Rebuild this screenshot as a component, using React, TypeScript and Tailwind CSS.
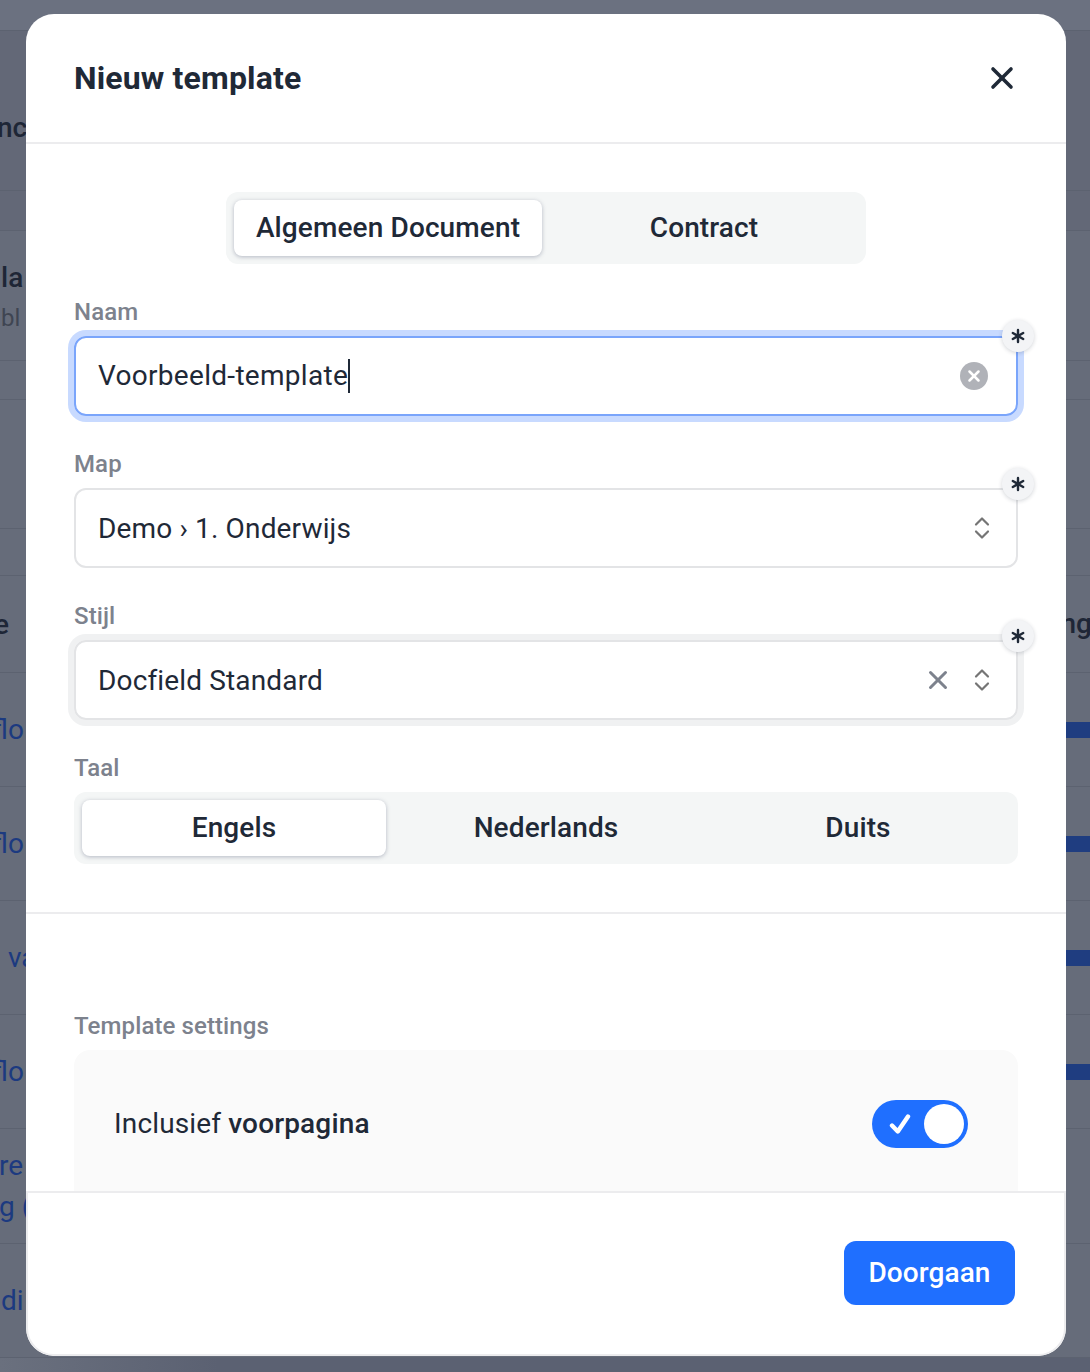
import { X, Asterisk } from 'lucide-react';

const font = { fontFamily: 'Roboto, "Noto Sans", sans-serif' };

// rijen van de pagina achter de modal: hoogte en tekst links/rechts
const ROWS = [
  { h: 'h-[31px]', bg: 'bg-[#6b7180]' },
  { h: 'h-[160px]', left: 'nc', bold: true, offset: '-ml-[3px] mt-[34px]', bg: 'bg-[#636877]' },
  { h: 'h-[40px]', bg: 'bg-[#636877]' },
  { h: 'h-[130px]', left: 'la', sub: 'bl', bold: true, offset: 'ml-[1px] mt-[4px]' },
  { h: 'h-[39px]' },
  { h: 'h-[129px]' },
  { h: 'h-[47px]' },
  { h: 'h-[97px]', left: 'e', bold: true, offset: '-ml-[6px]', right: 'ng' },
  { h: 'h-[114px]', left: 'flo', link: true, offset: '-ml-[8px]', bar: true },
  { h: 'h-[114px]', left: 'flo', link: true, offset: '-ml-[8px]', bar: true },
  { h: 'h-[114px]', left: 'va', link: true, offset: 'ml-[8px]', bar: true },
  { h: 'h-[114px]', left: 'flo', link: true, offset: '-ml-[8px]', bar: true },
  { h: 'h-[115px]', left: 're', sub: 'g (', link: true, offset: '-ml-[1px]' },
  { h: 'h-[114px]', left: 'di', link: true, offset: 'ml-[1px]' },
  { h: 'h-[15px]', bg: 'bg-gradient-to-r from-[#6a707e] to-[#5b6172] to-[20%]' },
];

function Background() {
  return (
    <div className="flex flex-col">
      {ROWS.map((r, i) => (
        <div key={i} className={`${r.h} ${r.bg ?? ''} flex items-center justify-between border-b border-[#5c6270] overflow-hidden`}>
          <div className={`${r.offset ?? ''} text-[28px] leading-[41px] ${r.link ? 'text-[#1c3a80]' : 'text-[#1e2636]'} ${r.bold ? 'font-medium' : ''}`}>
            <div className={r.bold ? 'text-[28px]' : ''}>{r.left}</div>
            {r.sub && <div className={r.bold ? 'text-[24px] font-normal text-[#3f4552]' : ''}>{r.sub}</div>}
          </div>
          {r.right && <div className="text-[28px] font-medium text-[#1e2636] -mr-[2px]">{r.right}</div>}
          {r.bar && <div className="w-[24px] h-[16px] bg-[#1f3d80]" />}
        </div>
      ))}
    </div>
  );
}

function RequiredBadge({ top = '-top-[22px]' }: { top?: string }) {
  return (
    <span className={`absolute ${top} -right-[18px] w-[32px] h-[32px] rounded-full bg-[#f3f4f6] shadow-[0_1px_4px_rgba(30,40,60,0.2)] flex items-center justify-center text-[#1f2937]`}>
      <Asterisk size={24} strokeWidth={2.4} />
    </span>
  );
}

function Label({ children }: { children: string }) {
  return <div className="h-[24px] mb-[12px] text-[24px] leading-[24px] font-medium tracking-[0.1px] text-[#7d828d]">{children}</div>;
}

function Updown() {
  return (
    <svg width="16" height="24" viewBox="0 0 16 24" fill="none" stroke="#757575" strokeWidth="2.2" strokeLinecap="round" strokeLinejoin="round">
      <path d="M2 8.5 8 2.5l6 6" />
      <path d="M2 15.5l6 6 6-6" />
    </svg>
  );
}

function Segment({ options, className = '' }: { options: string[]; className?: string }) {
  return (
    <div
      className={`grid gap-[8px] p-[8px] h-[72px] rounded-[12px] bg-[#f4f6f6] ${options.length === 3 ? 'grid-cols-3' : 'grid-cols-2'} ${className}`}
    >
      {options.map((o, i) => (
        <div
          key={o}
          className={`flex items-center justify-center rounded-[8px] text-[28px] font-medium tracking-[0.12px] text-[#1f2937] ${
            i === 0 ? 'bg-white shadow-[0_1px_4px_rgba(60,70,100,0.35)]' : ''
          }`}
        >
          {o}
        </div>
      ))}
    </div>
  );
}

export default function App() {
  return (
    <div className="relative w-[1090px] h-[1372px] overflow-hidden bg-[#666c7a]" style={font}>
      <Background />

      {/* modal */}
      <div className="absolute left-[26px] top-[14px] w-[1040px] h-[1342px] bg-white rounded-[28px] overflow-hidden flex flex-col">
        <div className="h-[130px] shrink-0 border-b-2 border-[#ececee] px-[48px] flex items-center justify-between">
          <h2 className="text-[32px] font-bold tracking-[0.15px] text-[#1f2937]">Nieuw template</h2>
          <X size={36} strokeWidth={2.4} className="text-[#1f2937] -mr-[2px]" />
        </div>

        <div className="flex-1 overflow-hidden">
          <div className="px-[48px] pt-[48px]">
            <Segment options={['Algemeen Document', 'Contract']} className="w-[640px] mx-auto" />

            <div className="mt-[36px]">
              <Label>Naam</Label>
              <div className="relative h-[80px] rounded-[12px] border-2 border-[#7aa5fb] ring-[6px] ring-[#c8daff] px-[22px] flex items-center justify-between text-[28px] tracking-[0.3px] text-[#1f2937]">
                <span className="flex items-center">
                  Voorbeeld-template
                  <span className="w-[2px] h-[34px] bg-[#1f2937]" />
                </span>
                <span className="w-[28px] h-[28px] rounded-full bg-[#b0b2b8] flex items-center justify-center text-white mr-[6px]">
                  <X size={18} strokeWidth={3.4} />
                </span>
                <RequiredBadge top="-top-[18px]" />
              </div>
            </div>

            <div className="mt-[36px]">
              <Label>Map</Label>
              <div className="relative h-[80px] rounded-[12px] border-2 border-[#e3e4e6] px-[22px] flex items-center justify-between text-[28px] tracking-[0.15px] text-[#1f2937]">
                <span className="pt-[2px]">Demo › 1. Onderwijs</span>
                <span className="flex mr-[4px]">
                  <Updown />
                </span>
                <RequiredBadge />
              </div>
            </div>

            <div className="mt-[36px]">
              <Label>Stijl</Label>
              <div className="relative h-[80px] rounded-[12px] border-2 border-[#e3e4e6] ring-[6px] ring-[#f0f1f2] px-[22px] flex items-center justify-between text-[28px] tracking-[0.15px] text-[#1f2937]">
                <span className="pt-[2px]">Docfield Standard</span>
                <span className="flex items-center gap-[21px] mr-[4px]">
                  <X size={30} strokeWidth={2.4} className="text-[#7d828d]" />
                  <Updown />
                </span>
                <RequiredBadge />
              </div>
            </div>

            <div className="mt-[36px]">
              <Label>Taal</Label>
              <Segment options={['Engels', 'Nederlands', 'Duits']} />
            </div>
          </div>

          <div className="mt-[48px] border-t-2 border-[#ececee]" />

          <div className="px-[48px] pt-[100px]">
            <Label>Template settings</Label>
            <div className="h-[200px] rounded-[16px] bg-[#fafafa] pl-[40px] pr-[50px] pt-[50px] flex items-start justify-between">
              <span className="text-[28px] leading-[48px] tracking-[0.15px] text-[#1f2937]">
                Inclusief <span className="font-medium">voorpagina</span>
              </span>
              <div className="w-[96px] h-[48px] rounded-full bg-[#1f6fff] flex items-center justify-between pl-[17px] pr-[4px]">
                <svg width="22" height="22" viewBox="0 0 22 22" fill="none" stroke="white" strokeWidth="4.4" strokeLinecap="round" strokeLinejoin="round">
                  <path d="M3 12.5l5.8 6L19 3.5" />
                </svg>
                <span className="w-[40px] h-[40px] rounded-full bg-white" />
              </div>
            </div>
          </div>
        </div>

        <div className="h-[165px] shrink-0 rounded-b-[28px] border-2 border-[#ececee] pr-[49px] pt-[48px] flex justify-end items-start">
          <button className="w-[171px] h-[64px] rounded-[12px] bg-[#1f6fff] text-white text-[28px] font-medium tracking-[0.1px]">
            Doorgaan
          </button>
        </div>
      </div>
    </div>
  );
}
